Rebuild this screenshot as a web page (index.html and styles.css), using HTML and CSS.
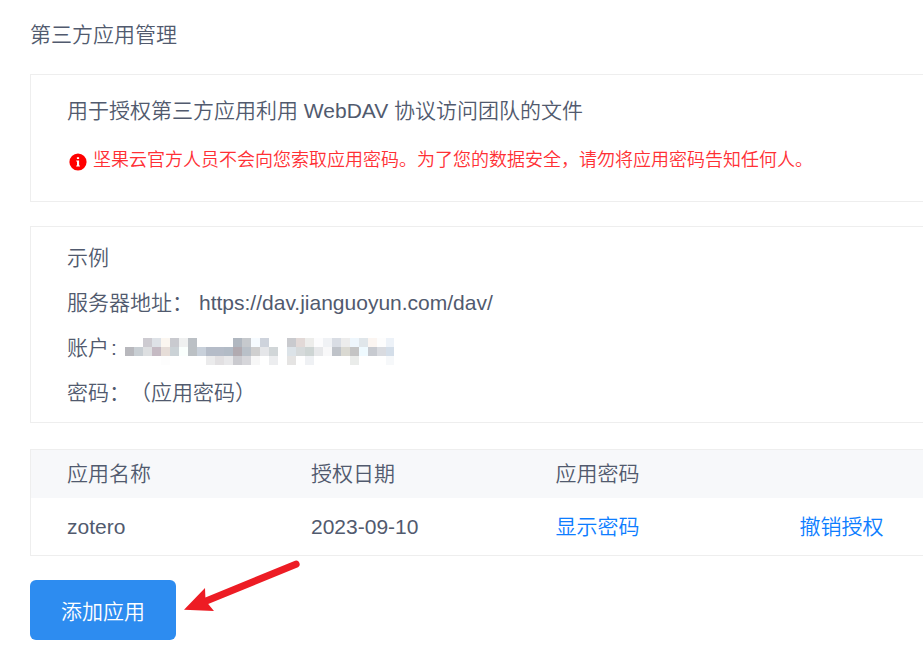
FILE: index.html
```html
<!DOCTYPE html>
<html lang="zh-CN">
<head>
<meta charset="utf-8">
<title>第三方应用管理</title>
<link rel="stylesheet" href="styles.css">
</head>
<body>
<main class="page">
  <h1 class="title">第三方应用管理</h1>
  <section class="panel intro">
    <p class="intro-text">用于授权第三方应用利用 WebDAV 协议访问团队的文件</p>
    <p class="warning">
      <svg class="info" viewBox="0 0 18 18"><circle cx="9" cy="9" r="8.6" fill="#f00"/><path d="M7.9 4.2h2.2v1.9H7.9zM7.2 7.5h2.9v4.9h.8v1H7.2v-1h.8V8.5h-.8z" fill="#fff"/></svg>
      <span>坚果云官方人员不会向您索取应用密码。为了您的数据安全，请勿将应用密码告知任何人。</span>
    </p>
  </section>
  <section class="panel example">
    <p class="line">示例</p>
    <p class="line"><span class="label">服务器地址：</span><span class="url">https://dav.jianguoyun.com/dav/</span></p>
    <p class="line account"><span class="account-label">账户</span><span class="colon">:</span><svg class="mosaic" viewBox="0 0 269 27" shape-rendering="crispEdges"></svg></p>
    <p class="line"><span class="pw-label">密码：</span><span>（应用密码）</span></p>
  </section>
  <section class="panel apps">
    <div class="row head"><span>应用名称</span><span>授权日期</span><span>应用密码</span><span></span></div>
    <div class="row"><span>zotero</span><span>2023-09-10</span><a>显示密码</a><a>撤销授权</a></div>
  </section>
  <div class="actions">
    <button class="add">添加应用</button>
    <svg class="arrow" viewBox="0 0 124 60"><path d="M4 34.7L25 13L25.4 22.4L115.1 -14.3A3.6 3.6 0 0 1 118 -7.8L28.2 29L34 36z" fill="#ed1c24"/></svg>
  </div>
</main>
<script src="mosaic.js"></script>
</body>
</html>
```
FILE: styles.css
```css
* { box-sizing: border-box; }
body {
  margin: 0;
  background: #fff;
  color: #515a6e;
  font: 350 21px/30px "Liberation Sans", "Noto Sans CJK SC", sans-serif;
  overflow: hidden;
}
p { margin: 0; white-space: nowrap; }
.page { padding: 20px 0 0 30px; }
.title { margin: 0; font-size: 21px; font-weight: 350; line-height: 30px; }
.panel { border: 1px solid #eee; border-right: 0; }
.intro { height: 128px; margin-top: 24px; padding: 21px 0 0 36px; }
.warning {
  display: flex;
  align-items: center;
  gap: 6px;
  height: 30px;
  margin-top: 19px;
  padding-left: 2px;
  color: #ff3035;
  font-size: 18px;
}
.info { width: 18px; height: 18px; margin-top: 3px; }
.example { height: 197px; margin-top: 24px; padding: 8px 0 0 36px; }
.line { display: flex; height: 45px; line-height: 45px; }
.label { width: 132px; }
.account-label { width: 44px; }
.colon { width: 14px; }
.mosaic { width: 269px; height: 27px; margin-top: 13px; }
.pw-label { width: 63px; }
.apps { height: 107px; margin-top: 26px; }
.row {
  display: grid;
  grid-template-columns: 244px 244.5px 244px 1fr;
  height: 57px;
  padding-left: 36px;
  line-height: 57px;
}
.head { height: 48px; line-height: 48px; background: #f7f8fa; }
.row a { color: #0d7dff; }
.actions { display: flex; align-items: flex-start; gap: 4px; margin-top: 24px; }
.add {
  width: 146px;
  height: 60px;
  padding: 4px 0 0;
  border: 0;
  border-radius: 6px;
  background: #2d8cf0;
  color: #fff;
  font: inherit;
}
.arrow { width: 124px; height: 60px; margin-top: -5px; overflow: visible; }
```
FILE: mosaic.js
```js
// Masked account name: three rows of 9px tiles, "" is an empty tile.
const rows = [
  ",,cdcbd1,dee2e7,fbf6f0,c9cacf,eff0f0,bbc0c5,,,,,b0b7c0,c6c9cd,f6fbff,ced3dc,,,c9cace,e2d9d7,ededeb,fcfcfd,f0f2f5,d9dde4,ececec,eef6fc,e0e6ea,fbf5f1,fdfdfd,edf2f8",
  "b8b8bd,c8ced3,dddfe1,c5bac3,e6ddd8,cbd2d6,fafffd,bbc0c4,c8d0da,b5bcc8,b5bcc8,b2bbc6,b1aab0,b9c0c8,cfcfcf,e5e6e9,d1d6d8,,dce3e8,d6dadb,ced5d4,e7e8ea,f8f8f9,bfc3c9,dad9d2,c4c4c4,effaff,c7cad0,d9dbe0,d4dee9",
  ",,,,fdfdfd,,,,,ebebec,e2e0e2,e8e8ea,cacacf,d6d6da,f7f7f7,,ecedef,,e5e4e3,,eff1f4,,,,,eaecea,,,,f6f8fa"
];
const svg = document.querySelector(".mosaic");
rows.forEach((row, y) => row.split(",").forEach((color, x) => {
  if (!color) return;
  const tile = document.createElementNS("http://www.w3.org/2000/svg", "rect");
  tile.setAttribute("x", x * 9);
  tile.setAttribute("y", y * 9);
  tile.setAttribute("width", 9);
  tile.setAttribute("height", 9);
  tile.setAttribute("fill", "#" + color);
  svg.append(tile);
}));
```
